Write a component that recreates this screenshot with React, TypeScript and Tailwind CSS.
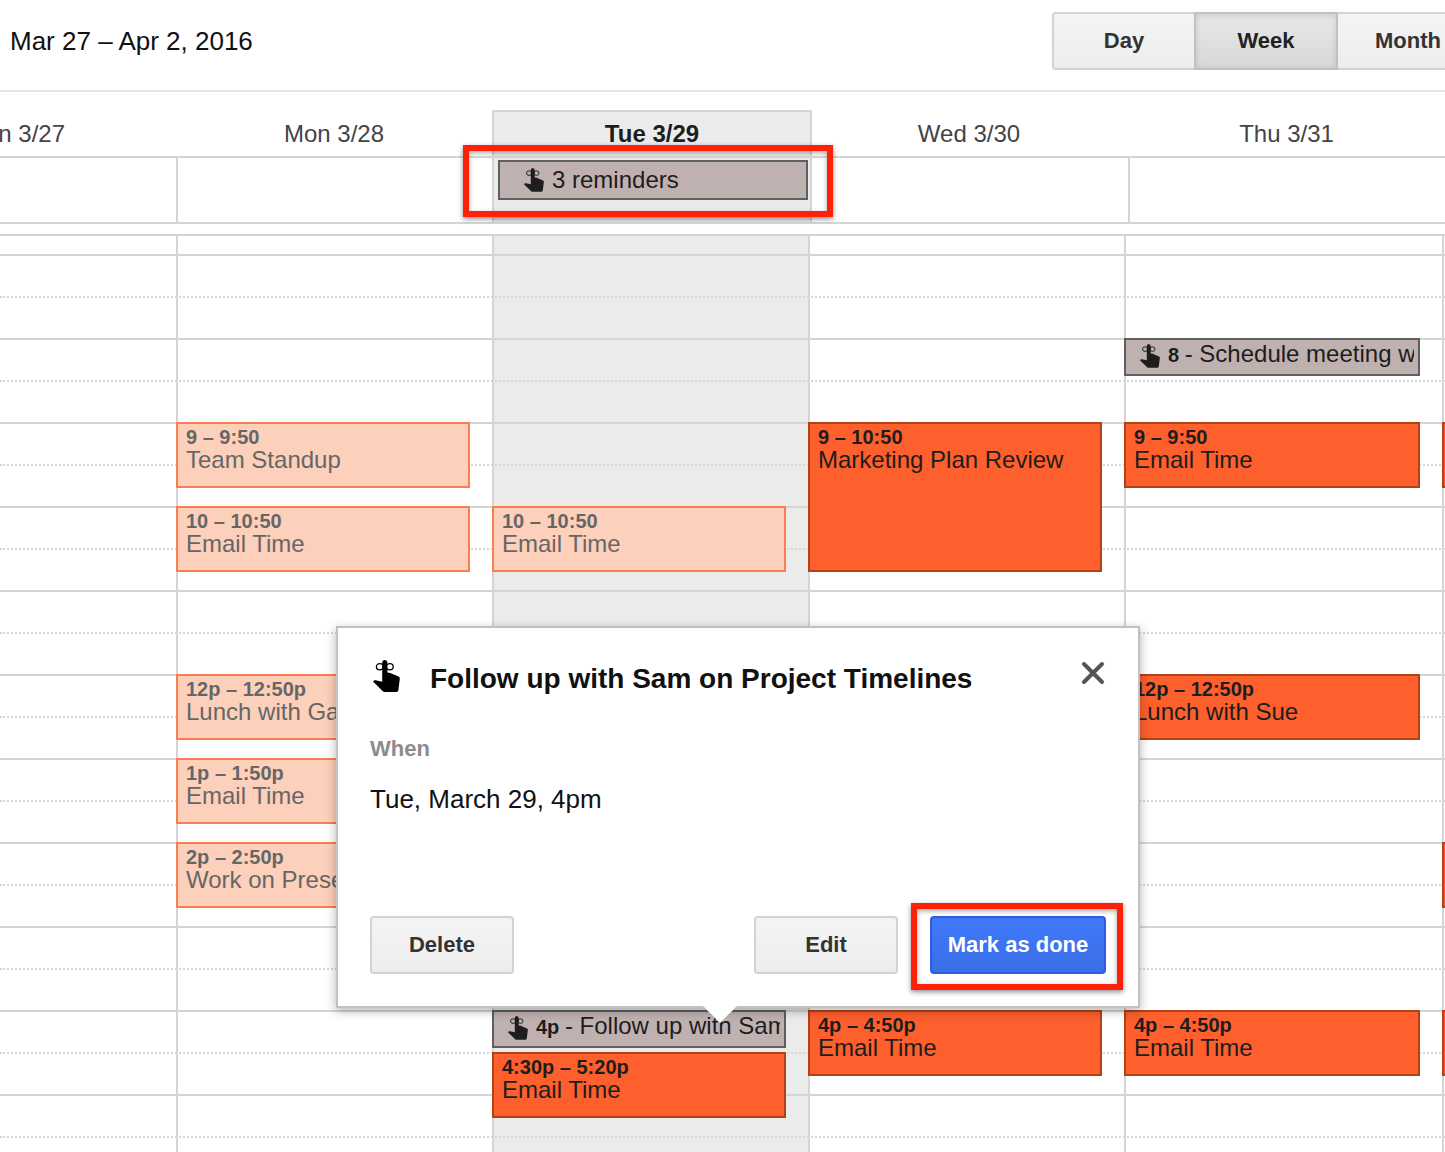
import { useState } from 'react';

type Kind = 'past' | 'event' | 'reminder';

type CalendarEvent = {
  day: number;
  slot: number;
  time: string;
  title: string;
  kind: Kind;
};

const days = ['Sun 3/27', 'Mon 3/28', 'Tue 3/29', 'Wed 3/30', 'Thu 3/31'];
const views = ['Day', 'Week', 'Month'];

// half hour slots, slot 0 is 7am
const slots = Array.from({ length: 22 }, (_, i) => i);

// day 0 is Sunday
const events: CalendarEvent[] = [
  { day: 1, slot: 4, time: '9 – 9:50', title: 'Team Standup', kind: 'past' },
  { day: 1, slot: 6, time: '10 – 10:50', title: 'Email Time', kind: 'past' },
  { day: 1, slot: 10, time: '12p – 12:50p', title: 'Lunch with Gary', kind: 'past' },
  { day: 1, slot: 12, time: '1p – 1:50p', title: 'Email Time', kind: 'past' },
  { day: 1, slot: 14, time: '2p – 2:50p', title: 'Work on Presentation', kind: 'past' },
  { day: 2, slot: 6, time: '10 – 10:50', title: 'Email Time', kind: 'past' },
  { day: 2, slot: 18, time: '4p', title: 'Follow up with Sam on Project Timelines', kind: 'reminder' },
  { day: 2, slot: 19, time: '4:30p – 5:20p', title: 'Email Time', kind: 'event' },
  { day: 3, slot: 4, time: '9 – 10:50', title: 'Marketing Plan Review', kind: 'event' },
  { day: 3, slot: 18, time: '4p – 4:50p', title: 'Email Time', kind: 'event' },
  { day: 4, slot: 2, time: '8', title: 'Schedule meeting with Sue', kind: 'reminder' },
  { day: 4, slot: 4, time: '9 – 9:50', title: 'Email Time', kind: 'event' },
  { day: 4, slot: 10, time: '12p – 12:50p', title: 'Lunch with Sue', kind: 'event' },
  { day: 4, slot: 18, time: '4p – 4:50p', title: 'Email Time', kind: 'event' },
  { day: 5, slot: 4, time: '', title: '', kind: 'event' },
  { day: 5, slot: 14, time: '', title: '', kind: 'event' },
  { day: 5, slot: 18, time: '', title: '', kind: 'event' },
];

const colors: Record<Kind, string> = {
  past: 'border-[#f97e51] bg-[#fdd0bb] text-[#666666]',
  event: 'border-[#b14216] bg-[#fd5f2d] text-[#1d1d1d]',
  reminder: 'border-[#5f5f5f] bg-[#c0b1b1] text-[#1d1d1d]',
};

function ReminderIcon({ className }: { className: string }) {
  return (
    <svg viewBox="0 0 27 32" className={className} aria-hidden="true">
      <ellipse cx="6.8" cy="6.7" rx="3.4" ry="3.1" fill="none" stroke="currentColor" strokeWidth="1.3" />
      <ellipse cx="16.8" cy="6.7" rx="3.4" ry="3.1" fill="none" stroke="currentColor" strokeWidth="1.3" />
      <path
        fill="currentColor"
        d="M9.2 2.4C9.2.9 10.3 0 11.8 0s2.6.9 2.6 2.4V12.6l2.8.4 8.4 3.6c1 .5 1.3 1.2 1.2 2.2L25.4 30c-.2 1.3-.9 2-2.2 2H11.8c-.9 0-1.6-.3-2.2-.9L0 21.6l.9-.9c.5-.4 1.1-.5 1.7-.4l6.6 1.4z"
      />
    </svg>
  );
}

function EventBox({ event }: { event: CalendarEvent }) {
  const { day, slot, time, title, kind } = event;
  const place = { gridColumn: day + 1, gridRowStart: slot + 2 };

  if (kind === 'reminder') {
    return (
      <div
        style={place}
        className={`mr-[22px] flex h-[38px] items-start overflow-hidden border-2 pr-1 pl-[14px] ${colors[kind]}`}
      >
        <ReminderIcon className="mt-1 mr-2 h-6 w-5 shrink-0" />
        <p className="min-w-0 flex-1 overflow-hidden text-[24px] leading-[28px] whitespace-nowrap">
          <b className="text-[20px]">{time} </b>- {title}
        </p>
      </div>
    );
  }

  const height = time === '9 – 10:50' ? 'h-[150px]' : 'h-[66px]';
  return (
    <div
      style={place}
      className={`overflow-hidden border-2 pt-[3px] whitespace-nowrap ${day === 5 ? 'w-[294px]' : 'mr-[22px] px-2'} ${height} ${colors[kind]}`}
    >
      <p className="text-[20px] leading-[20px] font-bold">{time}</p>
      <p className="text-[24px] leading-[26px]">{title}</p>
    </div>
  );
}

function ReminderPopup({ onClose }: { onClose: () => void }) {
  const button =
    'h-[58px] w-36 rounded-[4px] border-2 border-[#d2d2d2] bg-linear-to-b from-[#f4f4f4] to-[#ededed] pb-[2px] text-[22px] font-bold text-[#333333]';

  return (
    <div
      role="dialog"
      aria-labelledby="reminder-title"
      className="absolute top-[626px] left-[336px] w-[804px] border-2 border-[#c1c1c1] bg-white px-8 pt-8 pb-8 text-[#111111] shadow-[0_3px_10px_rgba(0,0,0,0.3)]"
    >
      <div className="flex items-start">
        <ReminderIcon className="ml-[3px] h-8 w-[27px] shrink-0 text-black" />
        <h2 id="reminder-title" className="ml-[30px] flex-1 pt-[3px] text-[28px] leading-8 font-bold">
          Follow up with Sam on Project Timelines
        </h2>
        <button type="button" aria-label="Close" onClick={onClose} className="text-[#555555]">
          <svg viewBox="0 0 26 26" className="h-[26px] w-[26px]">
            <path d="M4 4l18 18M22 4L4 22" stroke="currentColor" strokeWidth="4" strokeLinecap="round" />
          </svg>
        </button>
      </div>
      <p className="mt-10 text-[22px] leading-7 font-bold text-[#8c8c8c]">When</p>
      <p className="mt-5 text-[26px] leading-8">Tue, March 29, 4pm</p>
      <div className="mt-[101px] flex">
        <button type="button" className={button}>Delete</button>
        <button type="button" className={`ml-auto ${button}`}>Edit</button>
        <div className="relative ml-8">
          <button
            type="button"
            onClick={onClose}
            className="h-[58px] w-44 rounded-[4px] border-2 border-[#2f5be8] bg-linear-to-b from-[#4079fb] to-[#3a6ee6] pb-[2px] text-[22px] font-bold text-white"
          >
            Mark as done
          </button>
          <div className="pointer-events-none absolute -top-[13px] -right-[17px] -bottom-4 -left-[19px] border-6 border-[#ff2008] shadow-[0_2px_5px_rgba(0,0,0,0.45),inset_0_2px_5px_rgba(0,0,0,0.35)]" />
        </div>
      </div>
      <svg viewBox="0 0 34 18" className="absolute top-full left-[365px] h-[18px] w-[34px]">
        <path d="M0 0h34L17 17z" fill="#ffffff" />
        <path d="M1 1l16 16L33 1" fill="none" stroke="#c1c1c1" strokeWidth="1" strokeOpacity="0.5" />
      </svg>
    </div>
  );
}

export default function App() {
  const [view, setView] = useState('Week');
  const [open, setOpen] = useState(true);

  return (
    <div className="relative flex h-screen flex-col overflow-hidden bg-white font-['Liberation_Sans',Arial,sans-serif] text-[#111111]">
      <header className="flex shrink-0 items-start justify-between border-b-2 border-[#e6e6e6] pt-3 pb-5 pl-[10px]">
        <h1 className="text-[26px] leading-[58px]">Mar 27 – Apr 2, 2016</h1>
        <div className="-mr-[35px] flex">
          {views.map((name) => (
            <button
              key={name}
              type="button"
              onClick={() => setView(name)}
              className={`-ml-[2px] h-[58px] w-36 border-2 pb-[2px] text-[22px] font-bold first:rounded-l-[4px] ${
                view === name
                  ? 'z-10 border-[#c1c1c1] bg-linear-to-b from-[#e8e8e8] to-[#d8d8d8] text-[#222222] shadow-[inset_0_2px_6px_rgba(0,0,0,0.12)]'
                  : 'border-[#d2d2d2] bg-linear-to-b from-[#f4f4f4] to-[#ededed] text-[#333333]'
              }`}
            >
              {name}
            </button>
          ))}
        </div>
      </header>

      <div className="mt-[18px] grid shrink-0 grid-cols-[176fr_316fr_318fr_318fr_317fr]">
        {days.map((day, i) => (
          <div
            key={day}
            className={`flex h-[46px] items-center whitespace-nowrap text-[24px] ${
              i === 0 ? 'justify-end overflow-hidden pr-[111px]' : 'justify-center'
            } ${
              i === 2
                ? '-mr-[2px] rounded-t-[2px] border-x-2 border-t-2 border-[#d5d5d5] bg-[#ebebeb] font-bold text-[#1d1d1d]'
                : 'pt-[2px] text-[#444444]'
            }`}
          >
            {day}
          </div>
        ))}
        {days.map((day, i) => (
          <div
            key={day}
            className={`h-[68px] border-y-2 border-[#d5d5d5] ${i > 0 ? 'border-l-2' : ''} ${
              i === 2 ? 'bg-[#ebebeb] pt-[2px] pr-[2px] pl-1' : ''
            }`}
          >
            {i === 2 && (
              <div className="relative">
                <div className={`flex h-10 items-center border-2 pl-6 ${colors.reminder}`}>
                  <ReminderIcon className="mr-2 h-6 w-5" />
                  <span className="text-[24px]">3 reminders</span>
                </div>
                <div className="pointer-events-none absolute -top-[15px] -right-[25px] -bottom-[17px] -left-[35px] border-6 border-[#ff2008] shadow-[0_2px_5px_rgba(0,0,0,0.45),inset_0_2px_5px_rgba(0,0,0,0.35)]" />
              </div>
            )}
          </div>
        ))}
      </div>

      <div className="mt-[10px] min-h-0 flex-1 overflow-hidden border-t-2 border-[#d5d5d5]">
        <div className="grid auto-rows-[42px] grid-cols-[176fr_316fr_316fr_316fr_318fr_minmax(0,3fr)] grid-rows-[18px]">
          <div style={{ gridColumn: 3, gridRow: '1 / 24' }} className="bg-[#ebebeb]" />
          {slots.map((slot) => (
            <div
              key={slot}
              style={{ gridRow: slot + 2 }}
              className={`col-span-full border-t-2 border-[#d5d5d5] ${slot % 2 ? 'border-dotted' : ''}`}
            />
          ))}
          {[2, 3, 4, 5, 6].map((column) => (
            <div key={column} style={{ gridColumn: column, gridRow: '1 / 24' }} className="border-l-2 border-[#d5d5d5]" />
          ))}
          {events.map((event) => (
            <EventBox key={`${event.day}-${event.slot}`} event={event} />
          ))}
        </div>
      </div>

      {open && <ReminderPopup onClose={() => setOpen(false)} />}
    </div>
  );
}
